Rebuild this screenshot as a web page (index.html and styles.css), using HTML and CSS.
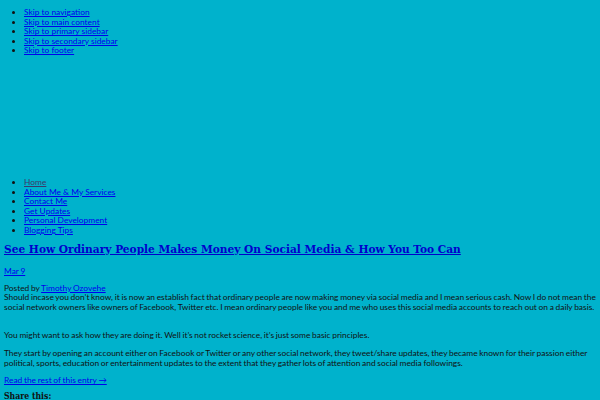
FILE: index.html
```html
<!DOCTYPE html>
<html>
<head>
<meta charset="utf-8">
<link rel="stylesheet" href="styles.css">
</head>
<body>
<ul class="skip">
<li><a href="#">Skip to navigation</a></li>
<li><a href="#">Skip to main content</a></li>
<li><a href="#">Skip to primary sidebar</a></li>
<li><a href="#">Skip to secondary sidebar</a></li>
<li><a href="#">Skip to footer</a></li>
</ul>
<div class="header"></div>
<ul class="nav">
<li><a class="current" href="#">Home</a></li>
<li><a href="#">About Me &amp; My Services </a></li>
<li><a href="#">Contact Me</a></li>
<li><a href="#">Get Updates</a></li>
<li><a href="#">Personal Development</a></li>
<li><a href="#">Blogging Tips</a></li>
</ul>
<div class="post">
<h2 class="title"><a href="#">See How Ordinary People Makes Money On Social Media &amp; How You Too Can</a></h2>
<p class="date"><a href="#">Mar 9</a></p>
<p class="byline">Posted by <a href="#">Timothy Ozovehe</a></p>
<p class="first">Should incase you don’t know, it is now an establish fact that ordinary people are now making money via social media and I mean serious cash. Now I do not mean the social network owners like owners of Facebook, Twitter etc. I mean ordinary people like you and me who uses this social media accounts to reach out on a daily basis.</p>
<p>You might want to ask how they are doing it. Well it’s not rocket science, it’s just some basic principles.</p>
<p>They start by opening an account either on Facebook or Twitter or any other social network, they tweet/share updates, they became known for their passion either political, sports, education or entertainment updates to the extent that they gather lots of attention and social media followings.</p>
<p class="more"><a href="#">Read the rest of this entry →</a></p>
<h3 class="share">Share this:</h3>
</div>
</body>
</html>
```
FILE: styles.css
```css
html, body {
  background: #00b2cc;
}
body {
  margin: 0;
  padding: 0 4px;
  font-family: Lato, "DejaVu Sans", sans-serif;
  font-size: 8.4px;
  line-height: 9.6px;
  word-spacing: -0.45px;
  color: #111;
}
a {
  color: #0000ee;
}
ul {
  margin: 0;
  padding-left: 20px;
  word-spacing: 0;
}
.skip {
  padding-top: 8px;
}
.header {
  height: 122px;
}
.nav .current {
  color: #3a3a6a;
}
.title {
  font-family: "DejaVu Serif", serif;
  font-stretch: condensed;
  font-weight: bold;
  font-size: 11.8px;
  line-height: 16px;
  word-spacing: 0;
  margin: 5px 0 0;
}
.title a {
  color: #0000cc;
}
p {
  margin: 0 0 9.4px;
}
.date {
  margin: 10px 0 7.6px;
}
.byline {
  margin-bottom: 0;
}
.first {
  margin-bottom: 18px;
}
.more {
  margin: -1.6px 0 6px;
}
.share {
  font-family: "DejaVu Serif", serif;
  font-stretch: condensed;
  font-weight: bold;
  font-size: 8.6px;
  line-height: 9.6px;
  word-spacing: 0;
  color: #111;
  margin: 0;
}
```
